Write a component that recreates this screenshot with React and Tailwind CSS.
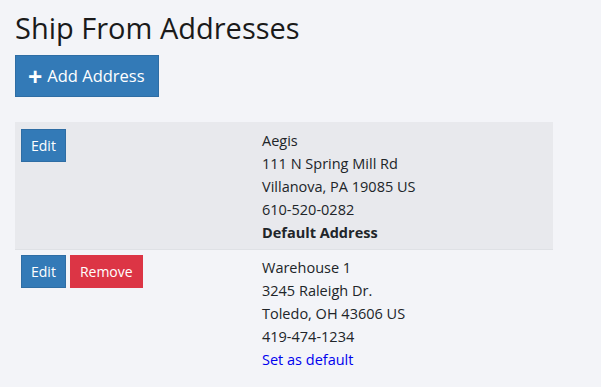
export default function App() {
  const font = { fontFamily: '"Open Sans", "Noto Sans", sans-serif' };
  return (
    <div className="min-h-[387px] w-full bg-[#f3f4f8] px-[15px] pt-[8px] text-[#212529]" style={font}>
      <h1 className="text-[29px] leading-[40px] font-normal text-[#1a1a1a]">Ship From Addresses</h1>
      <button className="mt-[7px] flex h-[42px] items-center gap-[5px] border border-[#2e6da4] bg-[#337ab7] pr-[13px] pl-[12px] text-[16.5px] text-white">
        <span className="text-[25px] leading-none font-bold">+</span>
        <span>Add Address</span>
      </button>
      <div className="mt-[25px] w-[538px]">
        <div className="flex border-b border-[#dfe1e5] bg-[#e8e9ed]">
          <div className="w-[241px] px-[6px] pt-[7px]">
            <div className="flex gap-[4px]">
              <button className="h-[33px] border border-[#2e6da4] bg-[#337ab7] px-[9px] text-[14px] text-white">Edit</button>
            </div>
          </div>
          <div className="flex-1 px-[6px] pt-[7px] pb-[5px] text-[14.5px] leading-[23px]">
            <div>Aegis</div>
            <div>111 N Spring Mill Rd</div>
            <div>Villanova, PA 19085 US</div>
            <div>610-520-0282</div>
            <div className="font-bold">Default Address</div>
          </div>
        </div>
        <div className="flex">
          <div className="w-[241px] px-[6px] pt-[5px]">
            <div className="flex gap-[4px]">
              <button className="h-[33px] border border-[#2e6da4] bg-[#337ab7] px-[9px] text-[14px] text-white">Edit</button>
              <button className="h-[33px] border border-[#dc3545] bg-[#dc3545] px-[9px] text-[14px] text-white">Remove</button>
            </div>
          </div>
          <div className="flex-1 px-[6px] pt-[6px] pb-[5px] text-[14.5px] leading-[23px]">
            <div>Warehouse 1</div>
            <div>3245 Raleigh Dr.</div>
            <div>Toledo, OH 43606 US</div>
            <div>419-474-1234</div>
            <div className="text-[#0000ee]">Set as default</div>
          </div>
        </div>
      </div>
    </div>
  );
}
